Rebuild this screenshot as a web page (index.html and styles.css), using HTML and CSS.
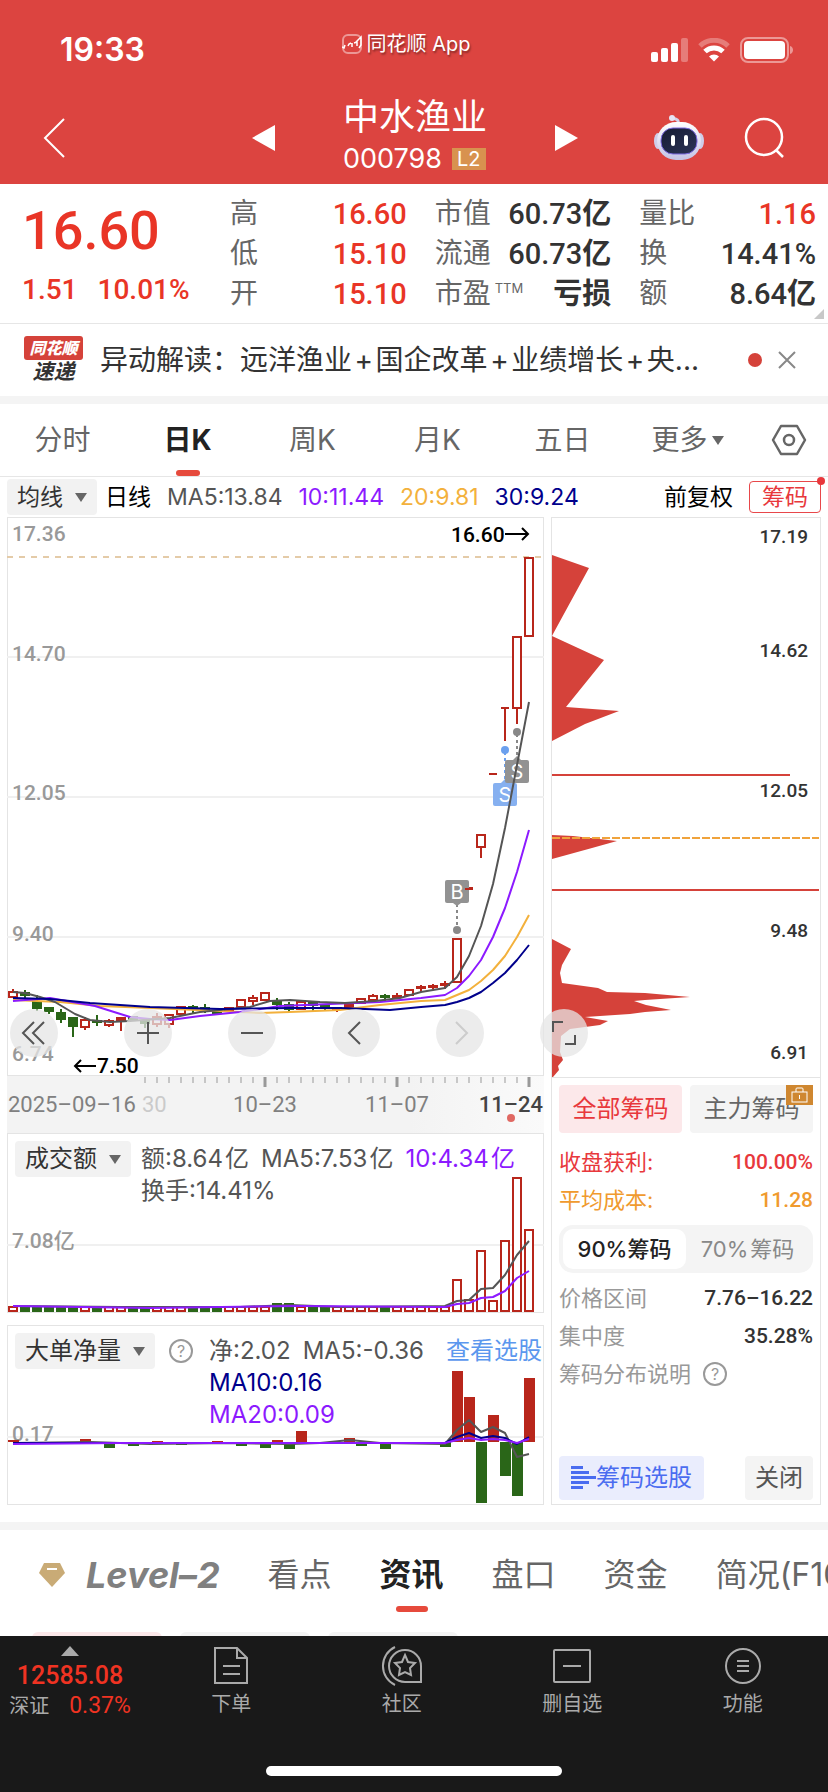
FILE: index.html
```html
<!DOCTYPE html>
<html lang="zh-CN">
<head>
  <meta charset="UTF-8">
  <meta name="viewport" content="width=device-width, initial-scale=1">
  <title>中水渔业 000798</title>
  <link rel="stylesheet" href="styles.css">
</head>
<body>
  <header class="header">
    <div class="status-bar">
      <span class="clock">19:33</span>
      <span class="app-name">
        <svg width="20" height="20" viewBox="0 0 20 20" fill="none" stroke="#fff"><rect x="1" y="1" width="18" height="18" rx="5" opacity=".45" stroke-width="2"/><path d="M0 13l2 1 1-3M6 12l1-2 2-1M10 9v4M12 9l3-1v4M14 8l5-5v8l-2 3" stroke-width="1.500"/></svg>
        同花顺 App
      </span>
      <span class="signals">
        <svg width="37" height="24" viewBox="0 0 37 24" fill="#fff"><rect y="14" width="7" height="10" rx="2"/><rect x="10" y="10" width="7" height="14" rx="2"/><rect x="20" y="5" width="7" height="19" rx="2"/><rect x="30" width="7" height="24" rx="2" opacity=".3"/></svg>
        <svg width="32" height="24" viewBox="0 0 32 24" fill="none" stroke="#fff" stroke-width="5"><path d="M2 8a20 20 0 0 1 28 0" opacity=".3"/><path d="M7 13.500a13 13 0 0 1 18 0"/><path d="M16 23.500l-5-5a7 7 0 0 1 10 0z" fill="#fff" stroke="none"/></svg>
        <svg width="54" height="26" viewBox="0 0 54 26"><rect x="1" y="1" width="47" height="24" rx="7" fill="none" stroke="#fff" stroke-width="2" opacity=".45"/><rect x="4" y="4" width="41" height="18" rx="4" fill="#fff"/><path d="M50 9c4 1 4 7 0 8z" fill="#fff" opacity=".45"/></svg>
      </span>
    </div>
    <div class="title-bar">
      <button class="icon-button back" aria-label="返回">
        <svg width="24" height="42" viewBox="0 0 24 42" fill="none" stroke="#fff" stroke-width="2"><path d="M22 2L3 21l19 19"/></svg>
      </button>
      <div class="stock">
        <button class="icon-button" aria-label="上一只"><svg width="23" height="26" viewBox="0 0 23 26" fill="#fff"><path d="M23 0v26L0 13z"/></svg></button>
        <div class="stock-name">
          <h1>中水渔业</h1>
          <div class="stock-code">000798 <span class="l2">L2</span></div>
        </div>
        <button class="icon-button" aria-label="下一只"><svg width="23" height="26" viewBox="0 0 23 26" fill="#fff"><path d="M0 0v26l23-13z"/></svg></button>
      </div>
      <div class="tools">
        <button class="icon-button" aria-label="智能助手">
          <svg width="50" height="46" viewBox="0 0 50 46">
            <defs>
              <linearGradient id="shell" x1="0" y1="0" x2="0" y2="1"><stop offset="0" stop-color="#fff"/><stop offset="1" stop-color="#c4c2e4"/></linearGradient>
              <linearGradient id="face" x1="0" y1="0" x2="1" y2="1"><stop offset="0" stop-color="#171c33"/><stop offset="1" stop-color="#2b3357"/></linearGradient>
            </defs>
            <path d="M24 9c1-4-1-5-6-6" fill="none" stroke="#d5d3ea" stroke-width="3"/>
            <circle cx="18" cy="3" r="3" fill="#e6e4f4"/>
            <ellipse cx="4" cy="26" rx="4" ry="8" fill="#cfcde8"/>
            <ellipse cx="46" cy="26" rx="4" ry="8" fill="#cfcde8"/>
            <rect x="3" y="7" width="44" height="38" rx="19" fill="url(#shell)"/>
            <rect x="7" y="13" width="36" height="26" rx="12" fill="url(#face)" stroke="#7d6be0" stroke-width="1"/>
            <rect x="17" y="20" width="4" height="11" rx="2" fill="#fff"/>
            <rect x="30" y="20" width="4" height="11" rx="2" fill="#fff"/>
          </svg>
        </button>
        <button class="icon-button" aria-label="搜索">
          <svg width="42" height="42" viewBox="0 0 42 42" fill="none" stroke="#fff" stroke-width="2.500"><circle cx="20" cy="20" r="18"/><path d="M32 33l7 7"/></svg>
        </button>
      </div>
    </div>
  </header>

  <main>
    <section class="quote">
      <div class="price">
        <div class="price-now">16.60</div>
        <div class="price-change"><span>1.51</span><span>10.01%</span></div>
      </div>
      <dl class="quote-list">
        <div><dt>高</dt><dd class="red">16.60</dd></div>
        <div><dt>市值</dt><dd>60.73<b>亿</b></dd></div>
        <div><dt>量比</dt><dd class="red">1.16</dd></div>
        <div><dt>低</dt><dd class="red">15.10</dd></div>
        <div><dt>流通</dt><dd>60.73<b>亿</b></dd></div>
        <div><dt>换</dt><dd>14.41%</dd></div>
        <div><dt>开</dt><dd class="red">15.10</dd></div>
        <div><dt>市盈<sup>TTM</sup></dt><dd><b>亏损</b></dd></div>
        <div><dt>额</dt><dd>8.64<b>亿</b></dd></div>
      </dl>
      <span class="corner"></span>
    </section>

    <section class="news">
      <div class="news-logo"><b>同花顺</b><em>速递</em></div>
      <a class="news-text" href="#">异动解读：远洋渔业&#8202;+&#8202;国企改革&#8202;+&#8202;业绩增长&#8202;+&#8202;央...</a>
      <span class="news-dot"></span>
      <button class="icon-button" aria-label="关闭资讯"><svg width="18" height="18" viewBox="0 0 18 18" stroke="#888" stroke-width="2"><path d="M1 1l16 16M17 1L1 17"/></svg></button>
    </section>

    <nav class="period">
      <button>分时</button>
      <button class="active">日K</button>
      <button>周K</button>
      <button>月K</button>
      <button>五日</button>
      <button>更多<i class="caret"></i></button>
      <button aria-label="设置"><svg width="36" height="32" viewBox="0 0 36 32" fill="none" stroke="#666" stroke-width="2.500"><path d="M10 2h16l8 14-8 14H10L2 16z" stroke-linejoin="round"/><circle cx="18" cy="16" r="5"/></svg></button>
    </nav>

    <div class="ma-bar">
      <button class="chip">均线<i class="caret"></i></button>
      <b>日线</b>
      <span class="gray">MA5:13.84</span>
      <span class="purple">10:11.44</span>
      <span class="orange">20:9.81</span>
      <span class="navy">30:9.24</span>
      <span class="adjust">前复权</span>
      <button class="chips-toggle">筹码</button>
    </div>

    <div class="board">
      <div class="charts">
        <div class="panel">
          <svg id="kline" viewBox="7 517 537 559">
            <path class="grid" d="M7 657h537M7 797h537M7 937h537"/>
            <path d="M7 557h537" stroke="#e4cba8" stroke-width="2" stroke-dasharray="6 6"/>
            <g class="scale">
              <text x="12" y="541">17.36</text>
              <text x="12" y="661">14.70</text>
              <text x="12" y="800">12.05</text>
              <text x="12" y="941">9.40</text>
              <text x="12" y="1061">6.74</text>
            </g>
            <g id="candles"></g>
            <g class="marks">
              <path d="M457 904v24" stroke="#888" stroke-dasharray="3 3"/>
              <circle cx="457" cy="930" r="4" fill="#888"/>
              <path d="M453 903h8l-4 3z" fill="#929292"/>
              <rect x="445" y="880" width="24" height="23" rx="2" fill="#929292"/>
              <path d="M465 889h8" stroke="#b8261b"/>
              <text x="457" y="899">B</text>
              <path d="M505 752v30" stroke="#6ba0ee" stroke-dasharray="3 3"/>
              <circle cx="505" cy="750" r="4" fill="#6ba0ee"/>
              <path d="M517 734v24" stroke="#888" stroke-dasharray="3 3"/>
              <circle cx="517" cy="732" r="4" fill="#888"/>
              <path d="M501 783h8l-4-4z" fill="#86b0f0"/>
              <rect x="493" y="783" width="24" height="23" rx="2" fill="#86b0f0"/>
              <text x="505" y="802">S</text>
              <path d="M513 760h8l-4-4z" fill="#929292"/>
              <rect x="505" y="760" width="24" height="23" rx="2" fill="#929292"/>
              <text x="517" y="779">S</text>
            </g>
            <g class="ma">
              <path class="ma20" d="M13 1000L60 1002L100 1006L150 1008L220 1011L260 1013L290 1012L340 1010L380 1005L421 1001L445 1000L457 995L469 990L481 981L493 970L505 956L517 937L529 915"/>
              <path class="ma10" d="M13 1001L50 998L95 1006L130 1017L150 1019L170 1020L200 1016L240 1012L280 1006L330 1004L380 1002L421 998L445 995L457 988L469 976L481 960L493 937L505 908L517 872L529 830"/>
              <path class="ma5" d="M13 992L25 993L40 997L55 1002L75 1014L90 1020L110 1022L130 1021L170 1018L200 1012L230 1009L250 1007L270 1001L290 1000L320 1002L345 1003L375 1001L400 998L421 992L445 988L457 977L469 956L481 926L493 884L505 828L517 765L529 702"/>
              <path class="ma30" d="M13 998L50 999L90 1003L150 1007L220 1009L290 1008L340 1008L390 1010L421 1007L445 1005L457 1002L469 998L481 992L493 983L505 973L517 960L529 945"/>
            </g>
            <g class="extreme">
              <text x="451" y="542">16.60</text>
              <path d="M505 534h23M522 528l6 6-6 6"/>
              <text x="97" y="1073">7.50</text>
              <path d="M96 1066H75M81 1060l-6 6 6 6"/>
            </g>
          </svg>
          <div class="zoom-tools">
            <button aria-label="最早"><svg viewBox="0 0 48 48"><path d="M24 13L13 24l11 11M34 13L23 24l11 11"/></svg></button>
            <button aria-label="放大"><svg viewBox="0 0 48 48"><path d="M13 24h22M24 13v22"/></svg></button>
            <button aria-label="缩小"><svg viewBox="0 0 48 48"><path d="M13 24h22"/></svg></button>
            <button aria-label="左移"><svg viewBox="0 0 48 48"><path d="M28 13L17 24l11 11"/></svg></button>
            <button aria-label="右移" disabled><svg viewBox="0 0 48 48"><path d="M20 13l11 11-11 11"/></svg></button>
            <button aria-label="全屏"><svg viewBox="0 0 48 48"><path d="M13 23V13h10M35 26v9H25"/></svg></button>
          </div>
        </div>

        <svg id="axis" class="axis" viewBox="7 1076 537 57">
          <g id="ticks"></g>
          <text x="8" y="1112">2025–09–16</text>
          <text x="142" y="1112" opacity=".35">30</text>
          <text x="265" y="1112" text-anchor="middle">10–23</text>
          <text x="397" y="1112" text-anchor="middle">11–07</text>
          <text x="543" y="1112" text-anchor="end" class="today">11–24</text>
          <circle cx="511" cy="1118" r="4" fill="#e06862"/>
        </svg>

        <div class="panel">
          <svg id="volume" viewBox="7 1133 537 180">
            <path class="grid" d="M7 1245h537"/>
            <g id="volume-bars"></g>
            <g class="ma">
              <path class="ma5" d="M13 1306L120 1307L240 1307L290 1305L340 1307L445 1306L457 1301L469 1300L481 1289L493 1288L505 1275L517 1255L529 1241"/>
              <path class="ma10" d="M13 1306L150 1308L300 1306L445 1307L457 1304L469 1303L481 1298L493 1297L505 1291L517 1278L529 1271"/>
            </g>
            <text class="scale" x="12" y="1248">7.08亿</text>
          </svg>
          <div class="panel-head">
            <button class="chip">成交额<i class="caret"></i></button>
            <p><span>额:8.64&#8202;亿</span><span>MA5:7.53&#8202;亿</span><span class="purple">10:4.34&#8202;亿</span><br><span>换手:14.41%</span></p>
          </div>
        </div>

        <div class="panel panel-net">
          <svg id="net" viewBox="7 1325 537 180">
            <path class="grid" d="M7 1437h537"/>
            <text class="scale" x="12" y="1441">0.17</text>
            <g id="net-bars"></g>
            <g class="ma">
              <path class="ma5" d="M13 1443L90 1442L150 1444L230 1443L290 1444L320 1443L350 1440L380 1443L445 1444L457 1430L469 1420L481 1432L493 1427L505 1433L517 1457L529 1454"/>
              <path class="ma30" d="M13 1443L445 1443L457 1437L469 1433L481 1438L493 1436L505 1438L517 1444L529 1437"/>
              <path class="ma10" d="M13 1444L120 1443L445 1443L457 1440L469 1438L481 1440L493 1439L505 1440L517 1443L529 1439"/>
            </g>
          </svg>
          <div class="panel-head">
            <button class="chip">大单净量<i class="caret"></i></button>
            <button class="help" aria-label="说明">?</button>
            <p><span>净:2.02</span><span>MA5:-0.36</span><br><span class="navy">MA10:0.16</span><br><span class="purple">MA20:0.09</span></p>
            <a href="#">查看选股</a>
          </div>
        </div>
      </div>

      <aside class="cost">
        <svg viewBox="551 517 270 560">
          <g fill="#d5423a">
            <path d="M552 555L589 568L553 634L552 636L604 660L566 707L619 711L585 724L552 741z"/>
            <path d="M552 835L573 836L617 841L592 848L552 859z"/>
            <path d="M552 939L571 949L562 965L560 973L562 983L598 988L607 992L645 993L690 997L645 1000L634 1001L646 1005L671 1010L645 1012L630 1014L585 1017L608 1021L600 1025L570 1029L561 1036L560 1052L563 1060L558 1066L559 1070L553 1077H552z"/>
          </g>
          <path d="M552 775h238M552 890h267" stroke="#d5423a" stroke-width="2"/>
          <path d="M552 838h267" stroke="#f0a33c" stroke-width="2" stroke-dasharray="8 2"/>
          <g class="cost-scale">
            <text x="808" y="543">17.19</text>
            <text x="808" y="657">14.62</text>
            <text x="808" y="797">12.05</text>
            <text x="808" y="937">9.48</text>
            <text x="808" y="1059">6.91</text>
          </g>
        </svg>
        <div class="cost-body">
          <div class="cost-tabs">
            <button class="active">全部筹码</button>
            <button>主力筹码<i class="lock"><svg width="17" height="16" viewBox="0 0 17 16" fill="none" stroke="#fff"><rect x="1" y="5" width="15" height="10"/><path d="M5 5V2q0-1 1-1h5q1 0 1 1v3M8.500 8v4"/></svg></i></button>
          </div>
          <div class="cost-row red"><span>收盘获利:</span><b>100.00%</b></div>
          <div class="cost-row amber"><span>平均成本:</span><b>11.28</b></div>
          <div class="segment">
            <button class="active">90%筹码</button>
            <button>70%&#8202;筹码</button>
          </div>
          <div class="cost-row"><span>价格区间</span><b>7.76–16.22</b></div>
          <div class="cost-row"><span>集中度</span><b>35.28%</b></div>
          <div class="cost-row cost-help"><span>筹码分布说明</span><button class="help" aria-label="筹码分布说明">?</button></div>
          <div class="cost-actions">
            <button class="pick"><svg width="25" height="24" viewBox="0 0 25 24" fill="#4a6cf0"><path d="M0 0h12v3H0zM0 5h18v3H0zM0 10h25v3H0zM0 15h18v3H0zM0 20h12v3H0z"/></svg>筹码选股</button>
            <button class="close">关闭</button>
          </div>
        </div>
      </aside>
    </div>

    <nav class="info-tabs">
      <a class="level2" href="#"><svg width="28" height="26" viewBox="0 0 28 26"><path d="M6 1h16l5 10-13 14L1 11z" fill="#c9ab76"/><path d="M9 7h10" stroke="#fff" stroke-width="2"/></svg>Level–2</a>
      <a href="#">看点</a>
      <a href="#" class="active">资讯</a>
      <a href="#">盘口</a>
      <a href="#">资金</a>
      <a href="#">简况(F10)</a>
    </nav>
    <div class="filters"><span class="on"></span><span></span><span></span></div>
  </main>

  <nav class="tabbar">
    <a class="index" href="#">
      <i></i>
      <b>12585.08</b>
      <span><small>深证</small>0.37%</span>
    </a>
    <a href="#"><svg width="38" height="40" viewBox="0 0 38 40"><path d="M3 2h22l10 10v25H3zM25 2v10h10M11 20h17M11 28h17"/></svg>下单</a>
    <a href="#"><svg width="42" height="40" viewBox="0 0 42 40"><path d="M40 36V20a16 16 0 1 0-16 16zM14 1a21 21 0 0 0 0 38"/><path d="M24 9l3 7 7 1-5 5 1 7-6-3-6 3 1-7-5-5 7-1z"/></svg>社区</a>
    <a href="#"><svg width="40" height="40" viewBox="0 0 40 40"><rect x="2" y="4" width="36" height="32" rx="1"/><path d="M11 20h18"/></svg>删自选</a>
    <a href="#"><svg width="38" height="40" viewBox="0 0 38 40"><circle cx="19" cy="20" r="17"/><path d="M13 15h12M13 20h12M13 25h12"/></svg>功能</a>
    <span class="home"></span>
  </nav>
  <script src="script.js"></script>
</body>
</html>
```

FILE: styles.css
```css
* {
  box-sizing: border-box;
}
body {
  margin: 0;
  height: 100vh;
  display: flex;
  flex-direction: column;
  background: #fff;
  color: #333;
  font-family: Inter, "Noto Sans CJK SC", sans-serif;
  font-size: 24px;
  line-height: 32px;
}
h1, p, dl, dd {
  margin: 0;
}
button {
  margin: 0;
  padding: 0;
  border: none;
  background: none;
  color: inherit;
  font: inherit;
  white-space: nowrap;
}
a {
  color: inherit;
  text-decoration: none;
}
svg {
  display: block;
}
main {
  flex: 1;
  min-height: 0;
  overflow: hidden;
}
.red { color: #e93526; }
.gray { color: #555; }
.purple { color: #8c1aff; }
.orange { color: #f3b13c; }
.navy { color: #00008c; }
.icon-button {
  display: flex;
}
.caret {
  display: inline-block;
  border: 6px solid transparent;
  border-top: 9px solid #666;
  border-bottom: 0;
}

/* header */
.header {
  background: #dc4440;
  color: #fff;
  height: 184px;
  flex: none;
}
.status-bar {
  display: grid;
  grid-template-columns: 1fr auto 1fr;
  align-items: center;
  height: 88px;
  padding: 12px 34px 0 60px;
}
.clock {
  font-size: 32px;
  font-weight: 600;
}
.app-name {
  display: flex;
  align-items: center;
  gap: 5px;
  margin-bottom: 12px;
  padding-right: 42px;
  font-size: 20px;
  text-shadow: 1px 2px 2px rgba(0, 0, 0, .4);
}
.signals {
  display: flex;
  align-items: center;
  justify-content: flex-end;
  gap: 10px;
}
.title-bar {
  display: grid;
  grid-template-columns: 1fr auto 1fr;
  align-items: center;
  height: 96px;
  padding: 4px 42px 0;
}
.stock {
  display: flex;
  align-items: center;
  gap: 68px;
  padding-left: 2px;
}
.stock-name h1 {
  font-size: 36px;
  font-weight: 400;
  line-height: 44px;
}
.stock-code {
  display: flex;
  align-items: center;
  gap: 10px;
  margin-bottom: 3px;
  font-size: 27px;
  line-height: 40px;
}
.l2 {
  padding: 0 5px;
  background: #d8924f;
  font-size: 20px;
  line-height: 22px;
}
.tools {
  display: flex;
  align-items: center;
  justify-content: flex-end;
  gap: 40px;
}

/* quote */
.quote {
  position: relative;
  display: flex;
  height: 140px;
  padding: 10px 12px 0 22px;
  border-bottom: 1px solid #e6e6e6;
  font-family: Roboto, "Noto Sans CJK SC", sans-serif;
}
.price {
  width: 208px;
  color: #e93526;
}
.price-now {
  font-size: 54px;
  line-height: 74px;
  font-weight: 500;
}
.price-change {
  display: flex;
  gap: 20px;
  margin-top: 6px;
  font-size: 28px;
  font-weight: 500;
}
.quote-list {
  flex: 1;
  display: grid;
  grid-template-columns: repeat(3, 1fr);
  column-gap: 28px;
  align-content: start;
  line-height: 40px;
}
.quote-list div {
  display: flex;
  justify-content: space-between;
}
.quote-list dt {
  color: #666;
  font-size: 28px;
}
.quote-list dd {
  font-size: 29px;
  font-weight: 500;
}
.quote-list sup {
  font-family: Inter, sans-serif;
  font-size: 13px;
  line-height: 1px;
  margin-left: 4px;
}
.corner {
  position: absolute;
  right: 4px;
  bottom: 4px;
  border-left: 10px solid transparent;
  border-bottom: 10px solid #c8c8c8;
}

/* news */
.news {
  display: flex;
  align-items: center;
  height: 80px;
  padding: 0 32px 0 24px;
  border-bottom: 8px solid #f4f4f4;
}
.news-logo {
  width: 59px;
  margin-right: 17px;
  text-align: center;
  font-style: italic;
  font-weight: 700;
}
.news-logo b {
  display: block;
  background: #d5423a;
  border-radius: 3px;
  color: #fff;
  font-size: 16px;
  line-height: 24px;
}
.news-logo em {
  display: block;
  color: #333;
  font-size: 21px;
  line-height: 24px;
}
.news-text {
  flex: 1;
  white-space: nowrap;
  font-size: 28px;
  line-height: 40px;
}
.news-dot {
  width: 14px;
  height: 14px;
  margin-right: 16px;
  border-radius: 50%;
  background: #d5423a;
}

/* period tabs */
.period {
  display: grid;
  grid-template-columns: repeat(6, 1fr) 78px;
  height: 73px;
  border-bottom: 1px solid #e6e6e6;
  color: #666;
  font-size: 28px;
}
.period button {
  position: relative;
  display: flex;
  align-items: center;
  justify-content: center;
}
.period .caret {
  margin-left: 4px;
}
.period .active {
  color: #222;
  font-weight: 700;
}
.period .active::after,
.info-tabs .active::after {
  content: "";
  position: absolute;
  left: 50%;
  bottom: 0;
  width: 24px;
  height: 6px;
  margin-left: -12px;
  border-radius: 3px;
  background: #e64a3c;
}

/* moving averages */
.ma-bar {
  display: flex;
  align-items: center;
  gap: 16px;
  height: 40px;
  padding: 0 7px;
  font-size: 23px;
  white-space: nowrap;
}
.ma-bar b {
  margin-left: -8px;
  color: #000;
  font-weight: 400;
}
.chip {
  display: flex;
  align-items: center;
  gap: 12px;
  height: 36px;
  padding: 0 10px;
  border-radius: 4px;
  background: #f2f2f2;
  color: #333;
}
.adjust {
  margin-left: auto;
  color: #000;
}
.chips-toggle {
  position: relative;
  width: 72px;
  height: 32px;
  border: 1px solid #e8474a;
  border-radius: 4px;
  color: #e8383c;
  line-height: 28px;
}
.chips-toggle::after {
  content: "";
  position: absolute;
  top: -5px;
  right: -5px;
  width: 8px;
  height: 8px;
  border-radius: 50%;
  background: #e8383c;
}

/* charts */
.board {
  display: grid;
  grid-template-columns: 537fr 270fr;
  gap: 7px;
  padding: 0 7px 17px;
  border-bottom: 8px solid #f4f4f4;
}
.panel {
  position: relative;
  display: grid;
  box-shadow: inset 0 0 0 1px #e4e4e4;
}
.panel > svg,
.panel-head {
  grid-area: 1 / 1;
  width: 100%;
}
.panel > svg {
  overflow: visible;
}
.panel-net {
  margin-top: 12px;
}
.grid {
  stroke: #f0f0f0;
  stroke-width: 2;
}
.scale {
  fill: #999;
  font: 500 21px Roboto, "Noto Sans CJK SC", sans-serif;
}
.up {
  fill: #fff;
  stroke: #b8261b;
  stroke-width: 2;
}
.down {
  fill: #2a6618;
  stroke: #2a6618;
  stroke-width: 2;
}
.inflow { fill: #b8261b; }
.outflow { fill: #2a6618; }
.marks path {
  stroke-width: 2;
}
.marks text {
  fill: #fff;
  font-size: 20px;
  text-anchor: middle;
}
.ma path {
  fill: none;
  stroke-width: 2;
  stroke-linejoin: round;
}
.ma .ma5 { stroke: #555; }
.ma .ma10 { stroke: #8c1aff; }
.ma .ma20 { stroke: #f3b13c; }
.ma .ma30 { stroke: #00008c; }
.extreme text {
  font: 500 21px Roboto, sans-serif;
}
.extreme path {
  fill: none;
  stroke: #000;
  stroke-width: 2;
}
.zoom-tools {
  position: absolute;
  left: 3px;
  bottom: 19px;
  display: flex;
  gap: 56px;
}
.zoom-tools button {
  width: 48px;
  height: 48px;
  border-radius: 50%;
  background: rgba(230, 230, 230, .75);
}
.zoom-tools button:first-child {
  margin-right: 10px;
}
.zoom-tools path {
  fill: none;
  stroke: #555;
  stroke-width: 2;
}
.zoom-tools button:disabled path {
  stroke: #ccc;
}
.axis {
  width: 100%;
  background: linear-gradient(to right, #f3f3f3 75%, #fafafa);
}
.axis text {
  fill: #808080;
  font: 22px Roboto, sans-serif;
}
.axis .today {
  fill: #444;
  font-weight: 500;
}
.panel-head {
  position: relative;
  display: flex;
  align-items: flex-start;
  padding: 8px 2px 0 8px;
  color: #555;
  font-size: 24px;
}
.panel-head .chip {
  font-size: 24px;
}
.panel-head p {
  padding: 2px 0 0 10px;
  white-space: nowrap;
}
.panel-head p span {
  margin-right: 12px;
}
.panel-head a {
  margin-left: auto;
  padding-top: 2px;
  color: #5b97ee;
  font-size: 24px;
}
.help {
  width: 24px;
  height: 24px;
  border: 2px solid #999;
  border-radius: 50%;
  color: #999;
  font-size: 16px;
  line-height: 20px;
}
.panel-head .help {
  margin: 6px 6px 0 14px;
}

/* cost distribution */
.cost {
  display: flex;
  flex-direction: column;
  box-shadow: inset 0 0 0 1px #e4e4e4;
}
.cost > svg {
  width: 100%;
  border-bottom: 1px solid #e4e4e4;
}
.cost-scale {
  fill: #333;
  font: 500 19px Roboto, sans-serif;
  text-anchor: end;
}
.cost-body {
  flex: 1;
  display: flex;
  flex-direction: column;
  padding: 7px 8px 5px;
  color: #999;
  font-size: 22px;
}
.cost-tabs {
  display: grid;
  grid-template-columns: 1fr 1fr;
  gap: 8px;
  margin-bottom: 10px;
  font-size: 24px;
}
.cost-tabs button {
  position: relative;
  height: 48px;
  border-radius: 4px;
  background: #f4f4f4;
  color: #666;
}
.cost-tabs .active {
  background: #fce8ea;
  color: #e8383c;
}
.lock {
  position: absolute;
  top: 0;
  right: 0;
  display: flex;
  padding: 2px 5px;
  background: #cf8730;
}
.cost-row {
  display: flex;
  justify-content: space-between;
  line-height: 38px;
}
.cost-row b {
  color: #333;
  font-family: Roboto, sans-serif;
  font-weight: 500;
  font-size: 21px;
}
.cost-row.red,
.cost-row.red b { color: #e8383c; }
.cost-row.amber,
.cost-row.amber b { color: #f09a2e; }
.segment {
  display: grid;
  grid-template-columns: 1fr 1fr;
  margin: 6px 0;
  padding: 4px;
  border-radius: 14px;
  background: #f4f4f4;
  color: #888;
}
.segment button {
  height: 40px;
  border-radius: 10px;
}
.segment .active {
  background: #fff;
  color: #222;
  font-weight: 500;
}
.cost-help {
  justify-content: flex-start;
  align-items: center;
  gap: 12px;
}
.cost-actions {
  display: flex;
  justify-content: space-between;
  margin-top: auto;
  font-size: 24px;
}
.cost-actions button {
  display: flex;
  align-items: center;
  height: 44px;
  padding: 0 10px;
  border-radius: 4px;
  background: #f4f4f4;
  color: #555;
}
.cost-actions .pick {
  padding: 0 12px;
  background: #eaedfd;
  color: #4a6cf0;
}

/* info tabs */
.info-tabs {
  display: flex;
  align-items: center;
  gap: 48px;
  height: 102px;
  padding: 0 0 12px 38px;
  overflow: hidden;
  color: #666;
  font-size: 32px;
  white-space: nowrap;
}
.info-tabs a {
  position: relative;
  line-height: 90px;
}
.info-tabs .active {
  color: #222;
  font-weight: 700;
}
.info-tabs .active::after {
  width: 32px;
  margin-left: -16px;
  bottom: 8px;
}
.info-tabs .level2 {
  display: flex;
  align-items: center;
  gap: 20px;
  color: #808080;
  font-size: 36px;
  font-style: italic;
  font-weight: 700;
}
.filters {
  display: flex;
  gap: 18px;
  padding-left: 32px;
}
.filters span {
  width: 130px;
  height: 48px;
  border-radius: 6px;
  background: #f4f4f4;
}
.filters .on {
  background: #fce8ea;
}

/* tab bar */
.tabbar {
  position: relative;
  flex: none;
  display: grid;
  grid-template-columns: 146px repeat(4, 1fr);
  height: 156px;
  background: #191919;
  color: #aaa;
  font-size: 20px;
  line-height: 28px;
}
.tabbar a {
  display: flex;
  flex-direction: column;
  align-items: center;
  padding-top: 10px;
  gap: 4px;
}
.tabbar svg {
  fill: none;
  stroke: #aaa;
  stroke-width: 2;
}
.tabbar .index {
  gap: 0;
  padding-right: 6px;
  color: #f03322;
  font-family: Roboto, "Noto Sans CJK SC", sans-serif;
  font-size: 23px;
}
.index i {
  border: 9px solid transparent;
  border-bottom: 10px solid #aaa;
  border-top: 0;
}
.index b {
  margin: 6px 0 2px;
  font-size: 25px;
  font-weight: 500;
}
.index small {
  margin-right: 20px;
  color: #aaa;
  font-size: 20px;
}
.home {
  position: absolute;
  left: 50%;
  bottom: 16px;
  width: 296px;
  height: 10px;
  margin-left: -148px;
  border-radius: 5px;
  background: #fff;
}
```

FILE: script.js
```js
// [high, body top, body bottom, low, direction]
const candles = [
  [989,991,998,998,1],[990,992,996,999,0],[995,1001,1009,1011,0],[1007,1007,1012,1014,0],[1009,1012,1020,1023,0],
  [1017,1017,1027,1037,0],[1017,1019,1028,1030,1],[1015,1020,1023,1026,0],[1019,1020,1026,1027,1],[1017,1017,1021,1031,1],
  [1016,1016,1021,1021,0],[1018,1020,1024,1028,0],[1013,1016,1025,1027,1],[1014,1014,1025,1028,1],[1006,1006,1015,1015,1],
  [1005,1006,1009,1013,0],[1004,1007,1010,1013,0],[1010,1010,1014,1014,0],[1007,1007,1011,1011,1],[999,999,1008,1008,1],
  [995,997,1002,1005,1],[992,992,1001,1001,1],[998,1000,1005,1010,0],[1002,1004,1010,1012,0],[1001,1001,1010,1010,1],
  [1001,1001,1006,1011,0],[1005,1005,1008,1010,0],[1007,1007,1010,1012,1],[1004,1004,1008,1008,1],[998,998,1004,1004,1],
  [994,995,1001,1001,1],[994,995,998,1001,0],[993,995,997,999,1],[989,989,996,996,1],[985,986,989,992,1],
  [984,985,987,989,1],[981,983,985,989,1],[938,938,983,983,1],[888,888,889,889,1],[834,834,848,858,1],
  [774,774,775,775,1],[708,708,709,741,1],[636,636,709,724,1],[557,557,637,637,1]
];
const downVolume = [1,2,3,4,5,7,10,11,15,16,17,22,23,25,26,31];
const volumeTop = { 22: 1304, 23: 1304, 37: 1280, 38: 1300, 39: 1251, 40: 1301, 41: 1241, 42: 1178, 43: 1230 };
const net = {
  0: 1440, 6: 1439, 8: 1448, 10: 1446, 12: 1441, 14: 1445, 17: 1441, 19: 1446, 21: 1448, 22: 1440, 23: 1449,
  24: 1431, 28: 1438, 29: 1446, 31: 1449, 36: 1447, 37: 1371, 38: 1397, 39: 1503, 40: 1415, 41: 1476, 42: 1496, 43: 1378
};

const x = i => 13 + i * 12;

document.getElementById('candles').innerHTML = candles.map(([high, top, bottom, low, up], i) => {
  const cls = up ? 'up' : 'down';
  const h = bottom - top;
  // a limit-up day has no body, only a dash
  if (h < 2) {
    return `<path class="${cls}" d="M${x(i) - 4} ${top}h8M${x(i)} ${top}V${low}"/>`;
  }
  return `<path class="${cls}" d="M${x(i)} ${high}V${low}"/>` +
    `<rect class="${cls}" x="${x(i) - 4}" y="${top + 1}" width="8" height="${Math.max(h - 2, 1)}"/>`;
}).join('');

document.getElementById('volume-bars').innerHTML = candles.map((c, i) => {
  const top = volumeTop[i] || 1307;
  const cls = downVolume.includes(i) ? 'down' : 'up';
  return `<rect class="${cls}" x="${x(i) - 4}" y="${top}" width="8" height="${1311 - top}"/>`;
}).join('');

document.getElementById('net-bars').innerHTML = Object.entries(net).map(([i, y]) => {
  const zero = 1442;
  return `<rect class="${y < zero ? 'inflow' : 'outflow'}" x="${x(+i) - 5}" y="${Math.min(y, zero)}" width="11" height="${Math.abs(y - zero)}"/>`;
}).join('');

let ticks = '';
for (let i = 11; i < 44; i++) {
  const major = i === 21 || i === 32 || i === 43;
  ticks += `<path d="M${x(i)} 1077v${major ? 10 : 6}" stroke="#999" stroke-width="${major ? 3 : 1}"/>`;
}
document.getElementById('ticks').innerHTML = ticks;
```
